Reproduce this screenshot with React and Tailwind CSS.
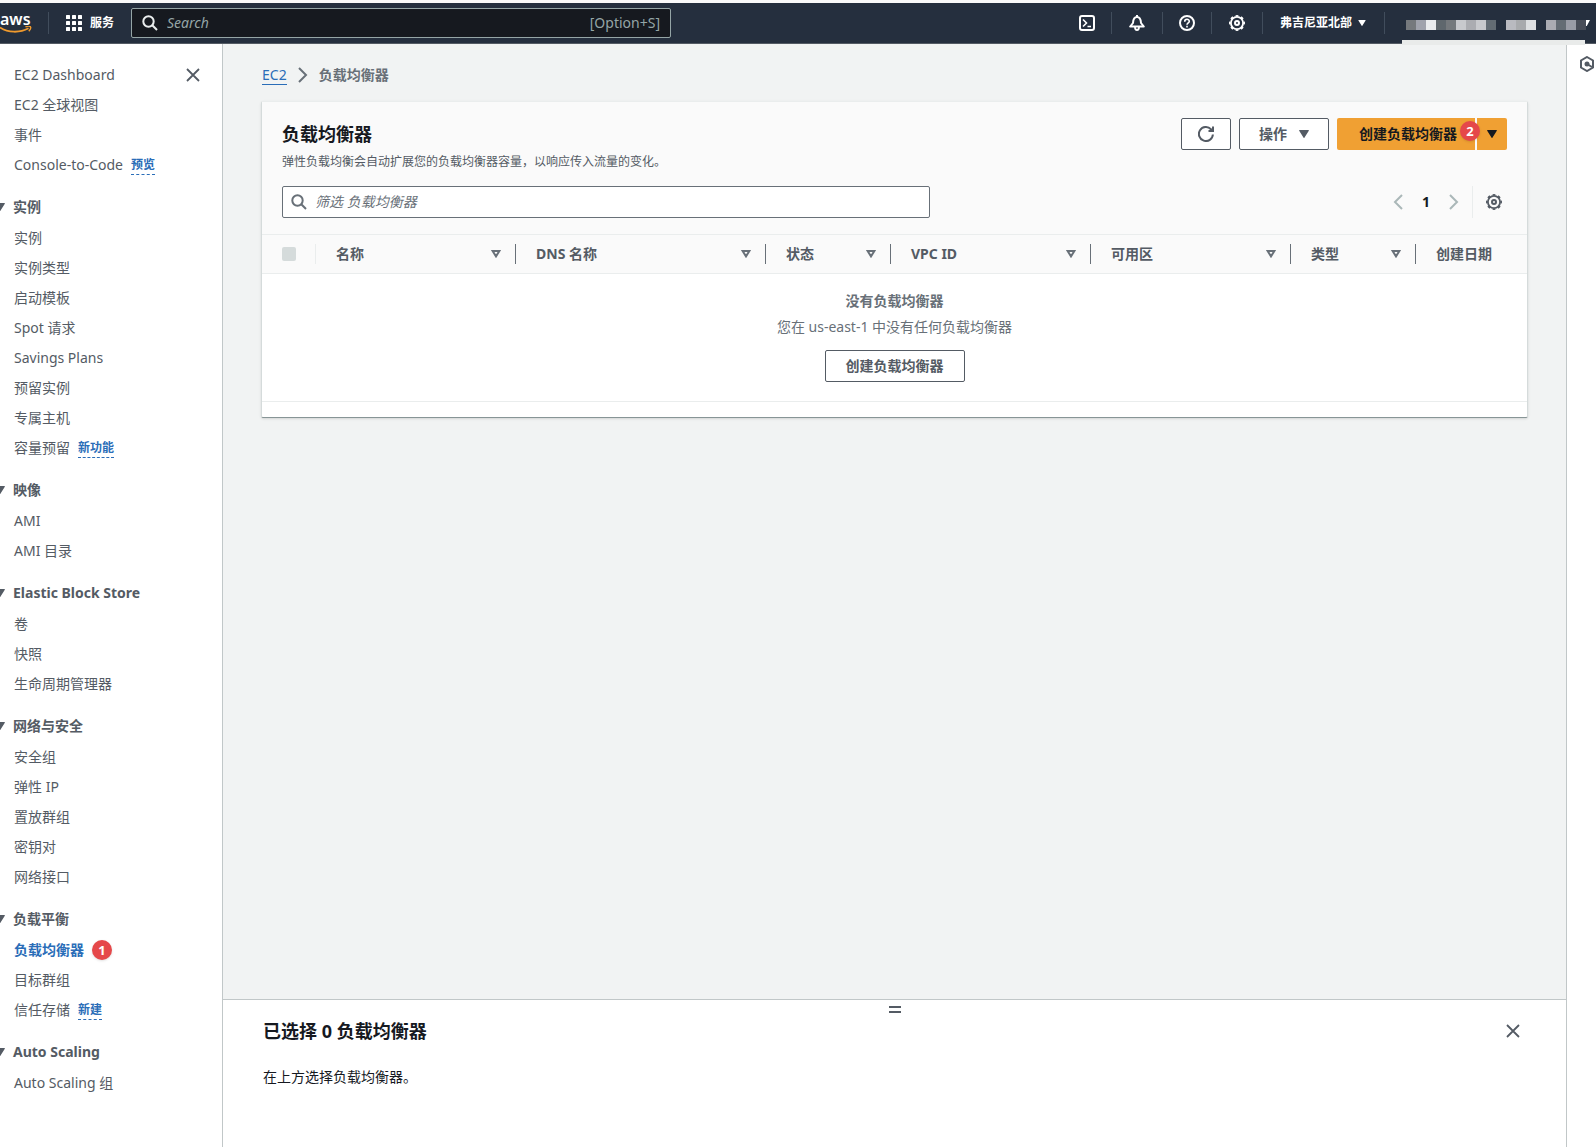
import React from "react";

const FONT = "font-['Noto_Sans','Noto_Sans_CJK_SC',sans-serif]";

const sections = [
  {
    items: [
      { label: "EC2 Dashboard" },
      { label: "EC2 全球视图" },
      { label: "事件" },
      { label: "Console-to-Code", tag: "预览" },
    ],
  },
  {
    title: "实例",
    items: [
      { label: "实例" },
      { label: "实例类型" },
      { label: "启动模板" },
      { label: "Spot 请求" },
      { label: "Savings Plans" },
      { label: "预留实例" },
      { label: "专属主机" },
      { label: "容量预留", tag: "新功能" },
    ],
  },
  { title: "映像", items: [{ label: "AMI" }, { label: "AMI 目录" }] },
  {
    title: "Elastic Block Store",
    items: [{ label: "卷" }, { label: "快照" }, { label: "生命周期管理器" }],
  },
  {
    title: "网络与安全",
    items: [
      { label: "安全组" },
      { label: "弹性 IP" },
      { label: "置放群组" },
      { label: "密钥对" },
      { label: "网络接口" },
    ],
  },
  {
    title: "负载平衡",
    items: [
      { label: "负载均衡器", active: true, badge: "1" },
      { label: "目标群组" },
      { label: "信任存储", tag: "新建" },
    ],
  },
  { title: "Auto Scaling", items: [{ label: "Auto Scaling 组" }] },
];

const columns = [
  { label: "名称", width: "w-[200px]" },
  { label: "DNS 名称", width: "w-[250px]" },
  { label: "状态", width: "w-[125px]" },
  { label: "VPC ID", width: "w-[200px]" },
  { label: "可用区", width: "w-[200px]" },
  { label: "类型", width: "w-[125px]" },
  { label: "创建日期", width: "", last: true },
];

const accountBlocks = [
  ["#75797d", "#a0a3ad", "#eaecee", "#5f676d", "#75797d", "#c8c9cd", "#abacb1", "#c8c9cd", "#636c74"],
  ["#b9bac0", "#a8aaad", "#dddfe1"],
  ["#abacb3", "#646c74", "#999ca6", "#484d58"],
];

function Caret({ className = "" }) {
  return (
    <svg viewBox="0 0 10 8" className={className} fill="currentColor" aria-hidden="true">
      <path d="M0.6 0h8.8a.5.5 0 0 1 .4.8L5.4 7.7a.5.5 0 0 1-.8 0L.2.8A.5.5 0 0 1 .6 0z" />
    </svg>
  );
}

function SortIcon() {
  return (
    <svg viewBox="0 0 10 8" className="h-2 w-2.5" fill="none" stroke="currentColor" strokeWidth="2" aria-hidden="true">
      <path d="M1.6 1h6.8L5 6.4z" />
    </svg>
  );
}

function SearchIcon({ className = "" }) {
  return (
    <svg viewBox="0 0 16 16" className={className} fill="none" stroke="currentColor" strokeWidth="2" aria-hidden="true">
      <circle cx="6.5" cy="6.5" r="5.2" />
      <path d="m10.3 10.3 4.7 4.7" />
    </svg>
  );
}

function GearIcon() {
  return (
    <svg viewBox="0 0 16 16" className="h-4 w-4" fill="none" stroke="currentColor" aria-hidden="true">
      <circle cx="8" cy="8" r="6.1" strokeWidth="1.8" />
      <circle cx="8" cy="8" r="7.2" strokeWidth="1.6" pathLength="16" strokeDasharray="1 1" strokeDashoffset="0.5" />
      <circle cx="8" cy="8" r="2" strokeWidth="2" />
    </svg>
  );
}

function CloseIcon() {
  return (
    <svg viewBox="0 0 16 16" className="h-4 w-4" fill="none" stroke="currentColor" strokeWidth="1.8" aria-hidden="true">
      <path d="m2 2 12 12M14 2 2 14" />
    </svg>
  );
}

function Chevron({ left = false }) {
  return (
    <svg viewBox="0 0 16 16" className="h-4 w-4" fill="none" stroke="currentColor" strokeWidth="2" aria-hidden="true">
      <path d={left ? "M12 1 5 8l7 7" : "m4 1 7 7-7 7"} />
    </svg>
  );
}

function Divider() {
  return <span className="h-[22px] w-px bg-[#414d5c]" />;
}

function Badge({ children, className = "" }) {
  return (
    <span className={`flex h-5 w-5 items-center justify-center rounded-full bg-[#e5484a] text-[13px] leading-5 font-bold text-white shadow ${className}`}>
      {children}
    </span>
  );
}

function TopBar() {
  return (
    <header className="mt-[3px] flex h-[41px] shrink-0 items-center border-b border-[#545b64] bg-[#252f3e] text-white">
      <a href="#home" aria-label="aws" className="flex w-8 flex-col">
        <span className="h-[14px] text-base leading-[14px] font-semibold">aws</span>
        <svg viewBox="0 0 32 8" className="h-2 w-8" fill="none" stroke="#f09a2d" aria-hidden="true">
          <path d="M0 1.5c8 5.5 20 5.500 28.500.8" strokeWidth="1.8" />
          <path d="M25.500.8c2-.8 4.500-.8 5 0s-.3 3-1.700 4.500" strokeWidth="1.4" />
        </svg>
      </a>
      <div className="ml-4 flex">
        <Divider />
      </div>
      <button type="button" className="ml-[17px] flex items-center gap-2 text-xs font-bold">
        <svg viewBox="0 0 16 16" className="h-4 w-4" fill="currentColor" aria-hidden="true">
          {[0, 6, 12].map((y) => [0, 6, 12].map((x) => <rect key={`${x}-${y}`} x={x} y={y} width="4" height="4" rx="0.5" />))}
        </svg>
        服务
      </button>
      <label className="ml-[17px] flex h-[30px] w-[540px] items-center rounded-xs border border-[#95a5a6] bg-[#16191f] px-2.5 text-sm text-[#95a5a6]">
        <SearchIcon className="h-4 w-4 shrink-0 text-[#eaeded]" />
        <input aria-label="Search" placeholder="Search" className="ml-[9px] min-w-0 flex-1 bg-transparent outline-none placeholder:text-[#95a5a6] placeholder:italic" />
        <span>[Option+S]</span>
      </label>
      <div className="ml-auto flex items-center">
        <button type="button" aria-label="CloudShell" className="mr-4">
          <svg viewBox="0 0 16 16" className="h-4 w-4" fill="none" stroke="currentColor" strokeWidth="2" aria-hidden="true">
            <rect x="1" y="1" width="14" height="14" rx="2" />
            <path d="m4 4.500 3.500 3.500L4 11.500M8.500 11.500H12" strokeWidth="1.6" />
          </svg>
        </button>
        <Divider />
        <button type="button" aria-label="通知" className="mx-[17px]">
          <svg viewBox="0 0 16 16" className="h-4 w-4" fill="none" stroke="currentColor" strokeWidth="2" strokeLinejoin="round" aria-hidden="true">
            <path d="M1.200 11.500h13.600L12 8C11.800 4.500 10.800 2 8 2S4.200 4.500 4 8z" />
            <path d="M8 0v2" />
            <path d="M6 12c0 4 4 4 4 0" strokeWidth="1.8" />
          </svg>
        </button>
        <Divider />
        <button type="button" aria-label="帮助" className="mx-4">
          <svg viewBox="0 0 16 16" className="h-4 w-4" fill="none" stroke="currentColor" strokeWidth="2" aria-hidden="true">
            <circle cx="8" cy="8" r="7" />
            <path d="M5.700 6.700C5.700 3.500 10.300 3.700 10.300 6.300 10.300 8 8 7.800 8 9.800M8 10.800v1.800" strokeWidth="1.6" />
          </svg>
        </button>
        <Divider />
        <button type="button" aria-label="设置" className="mx-[17px]">
          <GearIcon />
        </button>
        <Divider />
        <button type="button" className="mr-[18px] ml-[17px] flex items-center gap-1.5 text-xs font-bold">
          弗吉尼亚北部
          <Caret className="h-[6px] w-2" />
        </button>
        <Divider />
        <button type="button" aria-label="账户" className="relative ml-[17px] flex h-10 w-[194px] items-center pl-1">
          <span className="mt-1 flex gap-2.5">
            {accountBlocks.map((group, i) => (
              <span key={i} className="flex">
                {group.map((c, j) => (
                  <span key={j} className="h-2.5 w-2.5" style={{ backgroundColor: c }} />
                ))}
              </span>
            ))}
          </span>
          <svg viewBox="0 0 4 6" className="h-[6px] w-1 shrink-0" fill="currentColor" aria-hidden="true">
            <path d="M0 0h4L.8 6H0z" />
          </svg>
          <span className="absolute -bottom-[2px] left-0 h-[5px] w-[183px] bg-[#e9ebea]" />
        </button>
      </div>
    </header>
  );
}

function SideNav() {
  return (
    <nav className="relative w-[223px] shrink-0 border-r border-[#c1c7c8] bg-white pt-[21px] pb-8 text-sm text-[#545b64]">
      <button type="button" aria-label="关闭" className="absolute top-[23px] right-[21px]">
        <CloseIcon />
      </button>
      {sections.map((s, i) => (
        <section key={i} className={s.title ? "mt-[22px]" : ""}>
          {s.title && (
            <h2 className="mb-[11px] leading-5 font-bold">
              <button type="button" className="flex h-5 items-center">
                <span className="w-[13px] overflow-hidden">
                  <Caret className="-ml-[5px] h-2 w-2.5" />
                </span>
                {s.title}
              </button>
            </h2>
          )}
          <ul className="flex flex-col gap-2.5 pl-[14px]">
            {s.items.map((it) => (
              <li key={it.label} className="flex h-5 items-center gap-2 leading-5">
                <a href="#nav" className={it.active ? "font-bold text-[#2a6db8]" : ""}>
                  {it.label}
                </a>
                {it.tag && (
                  <a href="#tag" className="border-b border-dashed border-[#2a6db8] text-xs leading-[18px] font-bold text-[#2a6db8]">
                    {it.tag}
                  </a>
                )}
                {it.badge && <Badge>{it.badge}</Badge>}
              </li>
            ))}
          </ul>
        </section>
      ))}
    </nav>
  );
}

const outlineButton = "flex h-8 items-center justify-center rounded-xs border border-[#545b64] bg-white text-sm font-bold text-[#545b64]";

function LoadBalancerCard() {
  return (
    <section className="rounded-xs border border-[#d5dbdb] border-t-[#eaeded] border-b-[#879596] bg-white shadow-sm">
      <div className="bg-[#fafafa] px-5 pt-4">
        <div className="flex items-start justify-between">
          <div>
            <h1 className="text-lg leading-8 font-bold text-[#16191f]">负载均衡器</h1>
            <p className="text-xs leading-6 text-[#545b64]">弹性负载均衡会自动扩展您的负载均衡器容量，以响应传入流量的变化。</p>
          </div>
          <div className="flex gap-2">
            <button type="button" aria-label="刷新" className={`${outlineButton} w-[50px]`}>
              <svg viewBox="0 0 16 16" className="h-4 w-4" fill="none" stroke="currentColor" strokeWidth="2" aria-hidden="true">
                <path d="M14.900 8.500A7 7 0 1 1 13 3.200L14.500 5M15 .5V5h-4.500" />
              </svg>
            </button>
            <button type="button" className={`${outlineButton} w-[90px] gap-3`}>
              操作
              <Caret className="h-2 w-2.5" />
            </button>
            <div className="relative flex gap-0.5">
              <button type="button" className="h-8 w-[138px] rounded-l-xs bg-[#f0a033] pl-1 text-sm font-bold text-[#16191f]">
                创建负载均衡器
              </button>
              <button type="button" aria-label="更多创建选项" className="flex h-8 w-[30px] items-center justify-center rounded-r-xs bg-[#f0a033] text-[#16191f]">
                <Caret className="h-2 w-2.5" />
              </button>
              <Badge className="absolute top-[3px] right-[27px]">2</Badge>
            </div>
          </div>
        </div>
        <div className="mt-3 flex items-center justify-between pb-4">
          <label className="flex h-8 w-[648px] items-center rounded-xs border border-[#687078] bg-white px-2 text-sm text-[#687078]">
            <SearchIcon className="h-4 w-4" />
            <input aria-label="筛选 负载均衡器" placeholder="筛选 负载均衡器" className="ml-2 flex-1 outline-none placeholder:text-[#687078] placeholder:italic" />
          </label>
          <div className="flex items-center text-[#aab7b8]">
            <button type="button" aria-label="上一页">
              <Chevron left />
            </button>
            <button type="button" className="w-10 text-sm font-bold text-[#16191f]">
              1
            </button>
            <button type="button" aria-label="下一页">
              <Chevron />
            </button>
            <span className="ml-2.5 h-8 w-px bg-[#eaeded]" />
            <button type="button" aria-label="首选项" className="mr-[5px] ml-[13px] text-[#545b64]">
              <GearIcon />
            </button>
          </div>
        </div>
      </div>
      <table className="w-full table-fixed border-collapse text-sm text-[#545b64]">
        <thead>
          <tr className="h-[39px] border-y border-[#eaeded] bg-[#fafafa]">
            <th className="w-[54px] pl-5 text-left">
              <div className="flex items-center justify-between">
                <input type="checkbox" disabled aria-label="全选" className="h-3.5 w-3.5 appearance-none rounded-xs bg-[#d5dbdb]" />
                <span className="h-5 w-px bg-[#eaeded]" />
              </div>
            </th>
            {columns.map((c) => (
              <th key={c.label} className={`${c.width} pl-5 text-left font-bold`}>
                <div className="flex items-center justify-between">
                  <span className="whitespace-nowrap">{c.label}</span>
                  {!c.last && (
                    <span className="flex items-center gap-[14px] text-[#687078]">
                      <SortIcon />
                      <span className="h-5 w-px bg-[#687078]" />
                    </span>
                  )}
                </div>
              </th>
            ))}
          </tr>
        </thead>
        <tbody>
          <tr className="border-b border-[#eaeded]">
            <td colSpan={8} className="h-32 pt-4 align-top text-center text-[#687078]">
              <div className="flex flex-col items-center">
                <b className="leading-[22px]">没有负载均衡器</b>
                <p className="mt-1 leading-[22px]">您在 us-east-1 中没有任何负载均衡器</p>
                <button type="button" className={`${outlineButton} mt-3 px-5`}>
                  创建负载均衡器
                </button>
              </div>
            </td>
          </tr>
        </tbody>
      </table>
      <div className="h-[15px]" />
    </section>
  );
}

export default function App() {
  return (
    <div lang="zh-CN" className={`flex min-h-screen flex-col bg-[#fafafa] ${FONT}`}>
      <TopBar />
      <div className="flex flex-1">
        <SideNav />
        <div className="flex min-w-0 flex-1 flex-col bg-[#f1f3f3]">
          <main className="flex-1 pt-5 pr-[38px] pl-[38px]">
            <nav aria-label="breadcrumb" className="mb-[15px] flex h-[22px] items-center pl-px text-sm font-bold text-[#687078]">
              <a href="#ec2" className="border-b border-[#2a6db8] leading-[18px] font-normal text-[#2a6db8]">
                EC2
              </a>
              <span className="mx-2">
                <Chevron />
              </span>
              <span>负载均衡器</span>
            </nav>
            <LoadBalancerCard />
          </main>
          <section className="h-[148px] shrink-0 border-t border-[#c1c7c8] bg-white text-[#16191f]">
            <div className="flex h-[13px] items-end justify-center">
              <button type="button" aria-label="调整面板大小" className="h-[7px] w-3 border-y-2 border-[#545b64]" />
            </div>
            <div className="flex items-center justify-between pr-[45px] pl-10">
              <h2 className="text-lg leading-9 font-bold">已选择 0 负载均衡器</h2>
              <button type="button" aria-label="关闭面板" className="text-[#545b64]">
                <CloseIcon />
              </button>
            </div>
            <p className="mt-[17px] pl-10 text-sm leading-[22px]">在上方选择负载均衡器。</p>
          </section>
        </div>
        <aside className="w-[30px] shrink-0 border-l border-[#c1c7c8] bg-white pt-2.5 pl-3">
          <button type="button" aria-label="信息面板" className="text-[#545b64]">
            <svg viewBox="0 0 16 16" className="h-4 w-4" fill="none" stroke="currentColor" strokeWidth="2" aria-hidden="true">
              <path d="M8 1l6 3.500v7L8 15l-6-3.500v-7z" />
              <circle cx="8" cy="8" r="2.5" fill="currentColor" stroke="none" />
              <path d="m8 8 5 3" />
            </svg>
          </button>
        </aside>
      </div>
    </div>
  );
}
